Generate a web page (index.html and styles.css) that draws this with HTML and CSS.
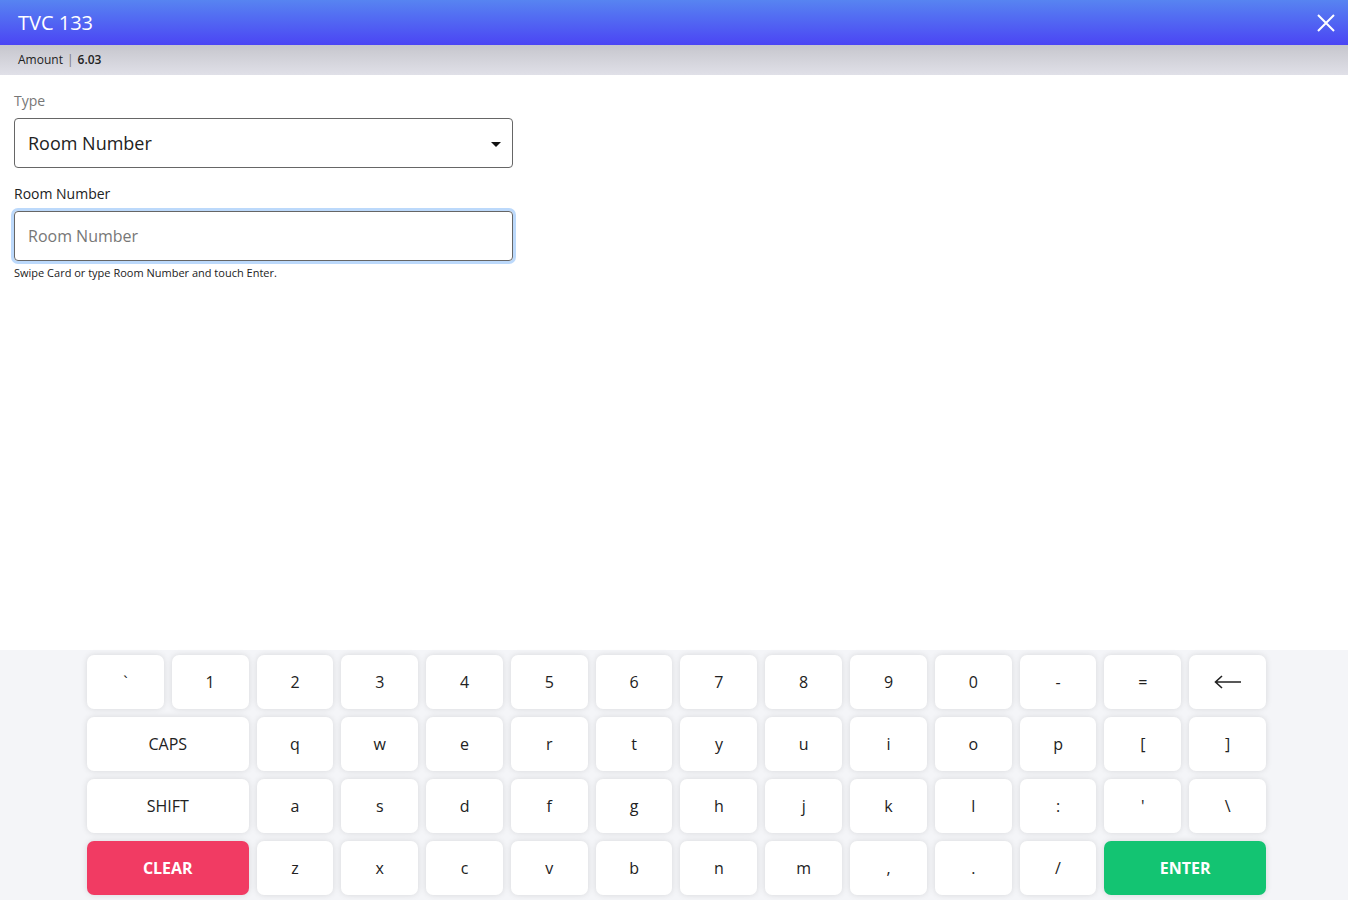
FILE: index.html
```html
<!DOCTYPE html>
<html lang="en">
<head>
	<meta charset="UTF-8">
	<title>TVC 133</title>
	<link rel="stylesheet" href="styles.css">
</head>
<body>
<div class="page">
	<div class="header">
		<h1 class="title">TVC 133</h1>
		<button class="close" type="button">
			<svg width="18" height="18" viewBox="0 0 18 18"><path d="M1 1L17 17M17 1L1 17" stroke="#fff" stroke-width="2" fill="none"/></svg>
		</button>
	</div>
	<div class="subbar">
		<span class="sub-label">Amount</span><span class="sep">|</span><span class="sub-value">6.03</span>
	</div>

	<div class="form">
		<label class="field-label muted">Type</label>
		<div class="select">
			<span>Room Number</span>
			<span class="caret"></span>
		</div>
		<label class="field-label">Room Number</label>
		<div class="input focused"><span class="placeholder">Room Number</span></div>
		<p class="help">Swipe Card or type Room Number and touch Enter.</p>
	</div>

	<div class="keyboard-wrap">
		<div class="keyboard">
			<button class="key">`</button>
			<button class="key">1</button>
			<button class="key">2</button>
			<button class="key">3</button>
			<button class="key">4</button>
			<button class="key">5</button>
			<button class="key">6</button>
			<button class="key">7</button>
			<button class="key">8</button>
			<button class="key">9</button>
			<button class="key">0</button>
			<button class="key">-</button>
			<button class="key">=</button>
			<button class="key"><svg width="28" height="14" viewBox="0 0 28 14"><path d="M27 7H2M8 1L1.5 7L8 13" stroke="#222" stroke-width="1.6" fill="none"/></svg></button>

			<button class="key wide">CAPS</button>
			<button class="key">q</button>
			<button class="key">w</button>
			<button class="key">e</button>
			<button class="key">r</button>
			<button class="key">t</button>
			<button class="key">y</button>
			<button class="key">u</button>
			<button class="key">i</button>
			<button class="key">o</button>
			<button class="key">p</button>
			<button class="key">[</button>
			<button class="key">]</button>

			<button class="key wide">SHIFT</button>
			<button class="key">a</button>
			<button class="key">s</button>
			<button class="key">d</button>
			<button class="key">f</button>
			<button class="key">g</button>
			<button class="key">h</button>
			<button class="key">j</button>
			<button class="key">k</button>
			<button class="key">l</button>
			<button class="key">:</button>
			<button class="key">'</button>
			<button class="key">\</button>

			<button class="key wide clear">CLEAR</button>
			<button class="key">z</button>
			<button class="key">x</button>
			<button class="key">c</button>
			<button class="key">v</button>
			<button class="key">b</button>
			<button class="key">n</button>
			<button class="key">m</button>
			<button class="key">,</button>
			<button class="key">.</button>
			<button class="key">/</button>
			<button class="key wide enter">ENTER</button>
		</div>
	</div>
</div>
</body>
</html>
```

FILE: styles.css
```css
*{
	margin:0;
	padding:0;
	box-sizing:border-box;
}

body{
	font-family:"Open Sans","Noto Sans",sans-serif;
	color:#222;
	background:#fff;
}

.page{
	height:900px;
	display:flex;
	flex-direction:column;
}

/* top bar */
.header{
	height:45px;
	display:flex;
	align-items:center;
	justify-content:space-between;
	padding:0 9px 0 18px;
	background:linear-gradient(to bottom,#5784f1,#4b45f4);
}

.title{
	font-size:20px;
	font-weight:400;
	color:#fff;
	line-height:1;
}

.close{
	border:0;
	background:none;
	width:26px;
	height:26px;
	display:flex;
	align-items:center;
	justify-content:center;
}

.subbar{
	height:30px;
	display:flex;
	align-items:center;
	padding:0 18px 2px;
	font-size:12px;
	background:linear-gradient(to bottom,#c6c6cd,#e0e0e8);
}

.sep{
	color:#777;
	margin:0 4px;
}

.sub-value{
	font-weight:600;
}

/* form */
.form{
	flex:1;
	width:527px;
	padding:16px 14px 0;
}

.field-label{
	display:block;
	font-size:14px;
	line-height:20px;
	color:#222;
	margin:16px 0 7px;
}

.field-label.muted{
	color:#777;
	margin:0 0 7px;
}

.select,
.input{
	height:50px;
	border:1px solid #666;
	border-radius:4px;
	display:flex;
	align-items:center;
	padding:0 13px;
}

.select{
	font-size:18px;
	justify-content:space-between;
	padding-right:11px;
}

.caret{
	width:0;
	height:0;
	border-left:5px solid transparent;
	border-right:5px solid transparent;
	border-top:5px solid #111;
	margin-top:2px;
}

.input.focused{
	box-shadow:0 0 0 3px #bcd9fb;
}

.placeholder{
	font-size:16px;
	color:#777;
}

.help{
	font-size:11px;
	line-height:16px;
	margin-top:4px;
}

/* keyboard */
.keyboard-wrap{
	height:250px;
	background:#f4f5f8;
	padding:5px 0 5px 87px;
}

.keyboard{
	width:1179px;
	display:grid;
	grid-template-columns:repeat(14,1fr);
	grid-auto-rows:54px;
	gap:8px;
}

.key{
	font-family:"Open Sans","Noto Sans",sans-serif;
	font-size:16px;
	color:#222;
	background:#fff;
	border:0;
	border-radius:7px;
	box-shadow:0 0 6px rgba(0,0,0,0.12);
	display:flex;
	align-items:center;
	justify-content:center;
}

.key.wide{
	grid-column:span 2;
}

.key.clear{
	background:#f13b63;
	color:#fff;
	font-weight:700;
}

.key.enter{
	background:#13c472;
	color:#fff;
	font-weight:700;
}
```
